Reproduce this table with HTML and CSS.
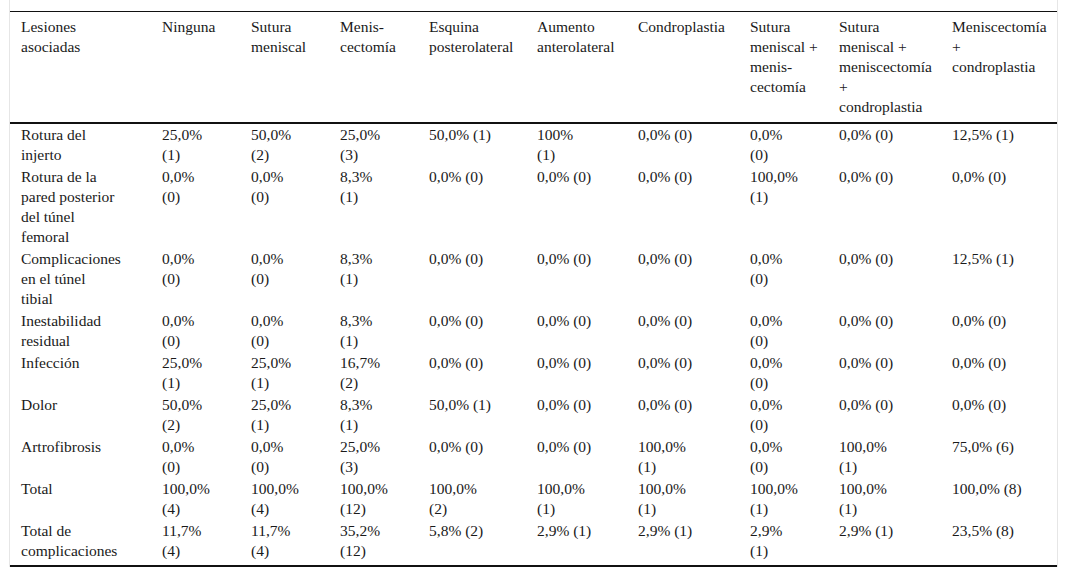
FILE: index.html
```html
<!DOCTYPE html>
<html lang="es">
<head>
<meta charset="utf-8">
<title>Lesiones asociadas</title>
<link rel="stylesheet" href="styles.css">
</head>
<body>
<div class="frame">
<table class="data">
<colgroup>
<col class="c1"><col class="c2"><col class="c3"><col class="c4"><col class="c5">
<col class="c6"><col class="c7"><col class="c8"><col class="c9"><col class="c10">
</colgroup>
<thead>
<tr>
<th>Lesiones<br>asociadas</th>
<th>Ninguna</th>
<th>Sutura<br>meniscal</th>
<th>Menis-<br>cectomía</th>
<th>Esquina<br>posterolateral</th>
<th>Aumento<br>anterolateral</th>
<th>Condroplastia</th>
<th>Sutura<br>meniscal +<br>menis-<br>cectomía</th>
<th>Sutura<br>meniscal +<br>meniscectomía<br>+<br>condroplastia</th>
<th>Meniscectomía<br>+<br>condroplastia</th>
</tr>
</thead>
<tbody>
<tr>
<td>Rotura del<br>injerto</td><td>25,0%<br>(1)</td><td>50,0%<br>(2)</td><td>25,0%<br>(3)</td><td>50,0% (1)</td><td>100%<br>(1)</td><td>0,0% (0)</td><td>0,0%<br>(0)</td><td>0,0% (0)</td><td>12,5% (1)</td>
</tr>
<tr>
<td>Rotura de la<br>pared posterior<br>del túnel<br>femoral</td><td>0,0%<br>(0)</td><td>0,0%<br>(0)</td><td>8,3%<br>(1)</td><td>0,0% (0)</td><td>0,0% (0)</td><td>0,0% (0)</td><td>100,0%<br>(1)</td><td>0,0% (0)</td><td>0,0% (0)</td>
</tr>
<tr>
<td>Complicaciones<br>en el túnel<br>tibial</td><td>0,0%<br>(0)</td><td>0,0%<br>(0)</td><td>8,3%<br>(1)</td><td>0,0% (0)</td><td>0,0% (0)</td><td>0,0% (0)</td><td>0,0%<br>(0)</td><td>0,0% (0)</td><td>12,5% (1)</td>
</tr>
<tr>
<td>Inestabilidad<br>residual</td><td>0,0%<br>(0)</td><td>0,0%<br>(0)</td><td>8,3%<br>(1)</td><td>0,0% (0)</td><td>0,0% (0)</td><td>0,0% (0)</td><td>0,0%<br>(0)</td><td>0,0% (0)</td><td>0,0% (0)</td>
</tr>
<tr>
<td>Infección</td><td>25,0%<br>(1)</td><td>25,0%<br>(1)</td><td>16,7%<br>(2)</td><td>0,0% (0)</td><td>0,0% (0)</td><td>0,0% (0)</td><td>0,0%<br>(0)</td><td>0,0% (0)</td><td>0,0% (0)</td>
</tr>
<tr>
<td>Dolor</td><td>50,0%<br>(2)</td><td>25,0%<br>(1)</td><td>8,3%<br>(1)</td><td>50,0% (1)</td><td>0,0% (0)</td><td>0,0% (0)</td><td>0,0%<br>(0)</td><td>0,0% (0)</td><td>0,0% (0)</td>
</tr>
<tr>
<td>Artrofibrosis</td><td>0,0%<br>(0)</td><td>0,0%<br>(0)</td><td>25,0%<br>(3)</td><td>0,0% (0)</td><td>0,0% (0)</td><td>100,0%<br>(1)</td><td>0,0%<br>(0)</td><td>100,0%<br>(1)</td><td>75,0% (6)</td>
</tr>
<tr>
<td>Total</td><td>100,0%<br>(4)</td><td>100,0%<br>(4)</td><td>100,0%<br>(12)</td><td>100,0%<br>(2)</td><td>100,0%<br>(1)</td><td>100,0%<br>(1)</td><td>100,0%<br>(1)</td><td>100,0%<br>(1)</td><td>100,0% (8)</td>
</tr>
<tr class="last">
<td>Total de<br>complicaciones</td><td>11,7%<br>(4)</td><td>11,7%<br>(4)</td><td>35,2%<br>(12)</td><td>5,8% (2)</td><td>2,9% (1)</td><td>2,9% (1)</td><td>2,9%<br>(1)</td><td>2,9% (1)</td><td>23,5% (8)</td>
</tr>
</tbody>
</table>
</div>
</body>
</html>
```

FILE: styles.css
```css
html, body {
  margin: 0;
  padding: 0;
  background: #ffffff;
}

body {
  font-family: "Times New Roman", "Liberation Serif", Times, serif;
  font-size: 15.5px;
  color: #1a1a1a;
}

.frame {
  margin-left: 9px;
  width: 1047px;
  padding-top: 11px;
  border-left: 1px solid #e6e6e6;
  border-right: 1px solid #e6e6e6;
}

.data {
  width: 1047px;
  table-layout: fixed;
  border-collapse: collapse;
  border-top: 1px solid #111111;
  border-bottom: 2px solid #111111;
  font-family: inherit;
  font-size: inherit;
}

.c1 { width: 141px; }
.c2 { width: 89px; }
.c3 { width: 89px; }
.c4 { width: 89px; }
.c5 { width: 108px; }
.c6 { width: 101px; }
.c7 { width: 112px; }
.c8 { width: 89px; }
.c9 { width: 113px; }
.c10 { width: 116px; }

.data th,
.data td {
  text-align: left;
  vertical-align: top;
  font-weight: normal;
  line-height: 20px;
  white-space: nowrap;
  padding: 1px 0 1px 11px;
}

.data th {
  padding-top: 5px;
  padding-bottom: 5px;
  border-bottom: 2px solid #111111;
}

.data .last td {
  padding-bottom: 4px;
}
```
